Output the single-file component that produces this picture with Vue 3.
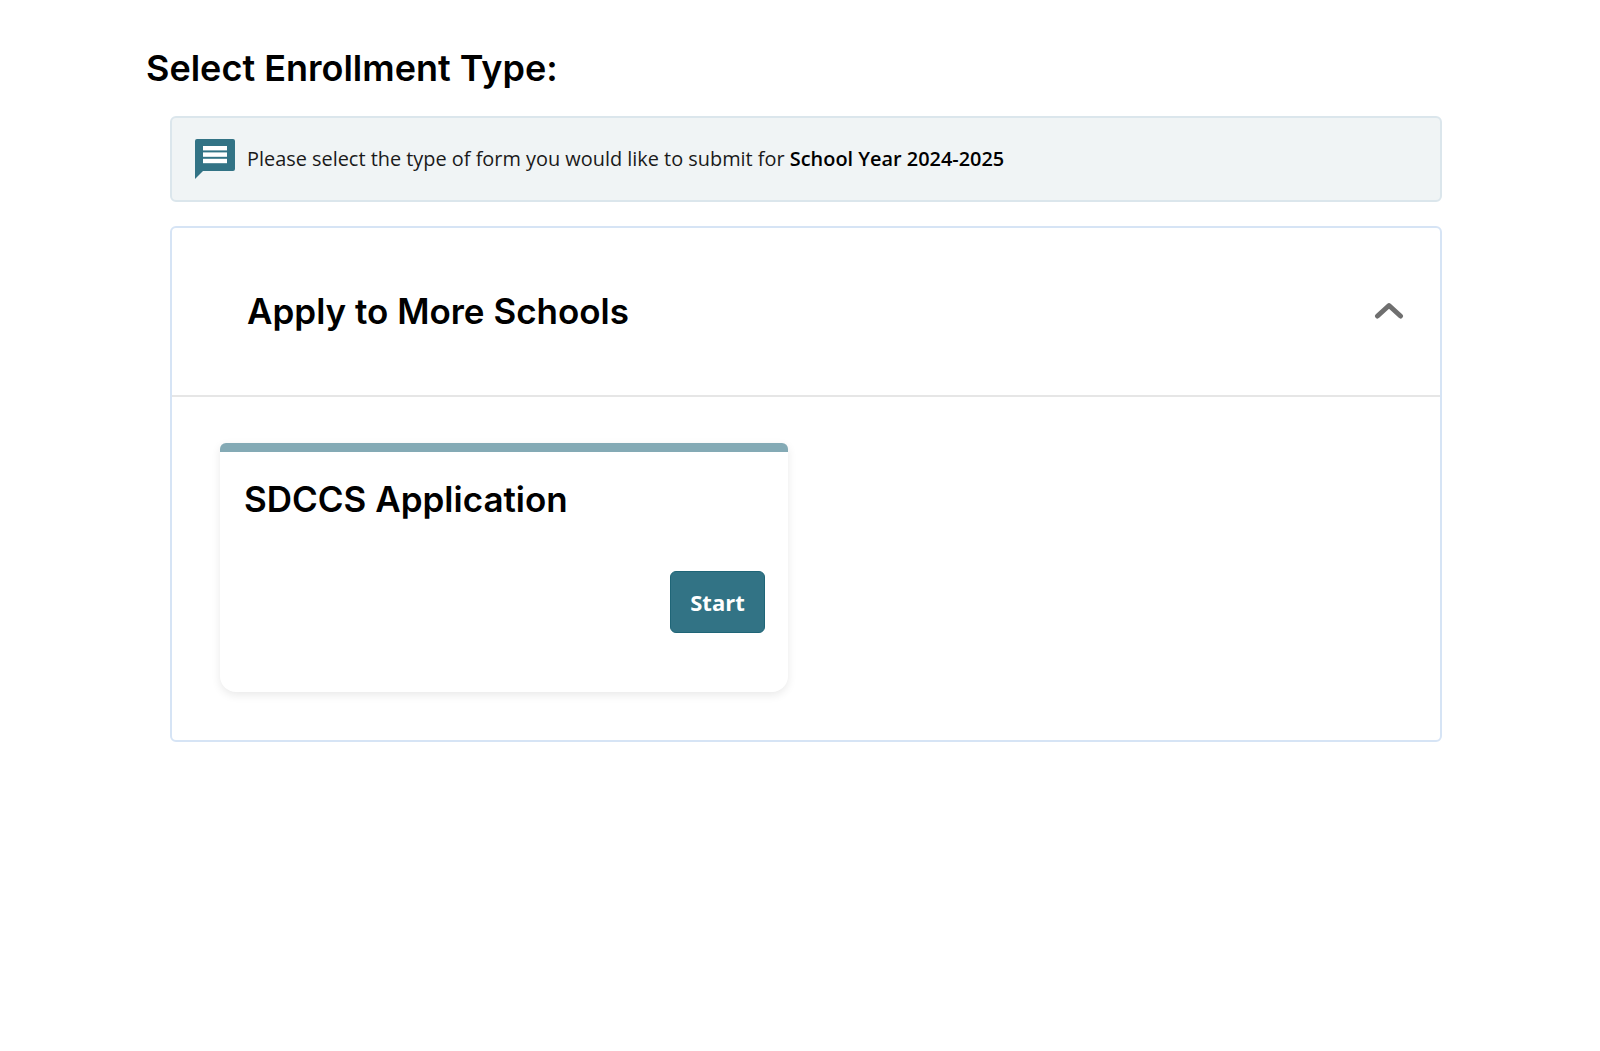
<template>
  <div class="page">
    <h1 class="page-title">Select Enrollment Type:</h1>
    <div class="content">
      <div class="notice">
        <svg class="notice-icon" width="40" height="40" viewBox="0 0 40 40">
          <path d="M2 0H38a2 2 0 0 1 2 2V30a2 2 0 0 1-2 2H8L0 40V2a2 2 0 0 1 2-2Z" fill="#327385" />
          <rect x="8" y="7" width="24" height="4.4" fill="#fff" />
          <rect x="8" y="13.4" width="24" height="4.4" fill="#fff" />
          <rect x="8" y="19.8" width="24" height="4.4" fill="#fff" />
        </svg>
        <span class="notice-text">Please select the type of form you would like to submit for <strong>School Year 2024-2025</strong></span>
      </div>
      <section class="panel">
        <header class="panel-head">
          <h2 class="panel-title">Apply to More Schools</h2>
          <svg class="chevron" width="30" height="18" viewBox="0 0 30 18">
            <path d="M3.5 15L15 4.5L26.5 15" fill="none" stroke="#6f6f6f" stroke-width="5" stroke-linecap="round" stroke-linejoin="round" />
          </svg>
        </header>
        <div class="panel-body">
          <div class="form-card">
            <h3 class="form-title">{{ formName }}</h3>
            <div class="form-actions">
              <button class="start-btn" type="button">Start</button>
            </div>
          </div>
        </div>
      </section>
    </div>
  </div>
</template>

<script setup>
const formName = 'SDCCS Application'
</script>

<style>
body {
  background: #fff;
}
</style>

<style scoped>
.page {
  padding: 44px 158px 0 146px;
  font-family: "Open Sans", "Liberation Sans", sans-serif;
  color: #000;
}

.page-title,
.panel-title,
.form-title {
  margin: 0;
  font-family: Inter, "Open Sans", sans-serif;
  font-weight: 600;
  line-height: 48px;
  font-variant-ligatures: none;
}

.page-title {
  font-size: 36px;
}

.content {
  margin: 24px 0 0 24px;
}

.notice {
  display: flex;
  align-items: center;
  gap: 12px;
  height: 86px;
  box-sizing: border-box;
  padding-left: 23px;
  background: #f0f4f5;
  border: 2px solid #dbe6ec;
  border-radius: 6px;
  font-size: 19.9px;
  color: #1a1a1a;
}

.notice-text {
  margin-top: -2px;
}

.notice strong {
  font-weight: 600;
  color: #000;
}

.notice-icon {
  flex: none;
}

.panel {
  margin-top: 24px;
  border: 2px solid #d6e4f5;
  border-radius: 6px;
}

.panel-head {
  display: flex;
  align-items: center;
  justify-content: space-between;
  height: 167px;
  padding: 0 36px 0 75px;
  border-bottom: 2px solid #e6e6e6;
}

.panel-title {
  margin-top: -2px;
  font-size: 35px;
}

.chevron {
  margin-top: -4px;
}

.panel-body {
  padding: 46px 48px 48px;
}

.form-card {
  width: 568px;
  height: 249px;
  box-sizing: border-box;
  padding: 0 23px 0 24px;
  background: #fff;
  border-top: 9px solid #84aab5;
  border-radius: 6px 6px 16px 16px;
  box-shadow: 0 3px 10px rgba(0, 0, 0, 0.09);
}

.form-title {
  margin-top: 23px;
  font-size: 35px;
}

.form-actions {
  display: flex;
  justify-content: flex-end;
  margin-top: 48px;
}

.start-btn {
  width: 95px;
  height: 62px;
  background: #327385;
  border: 1px solid #1f6577;
  border-radius: 6px;
  color: #fff;
  font-family: "Open Sans", sans-serif;
  font-size: 22px;
  font-weight: 700;
}
</style>
